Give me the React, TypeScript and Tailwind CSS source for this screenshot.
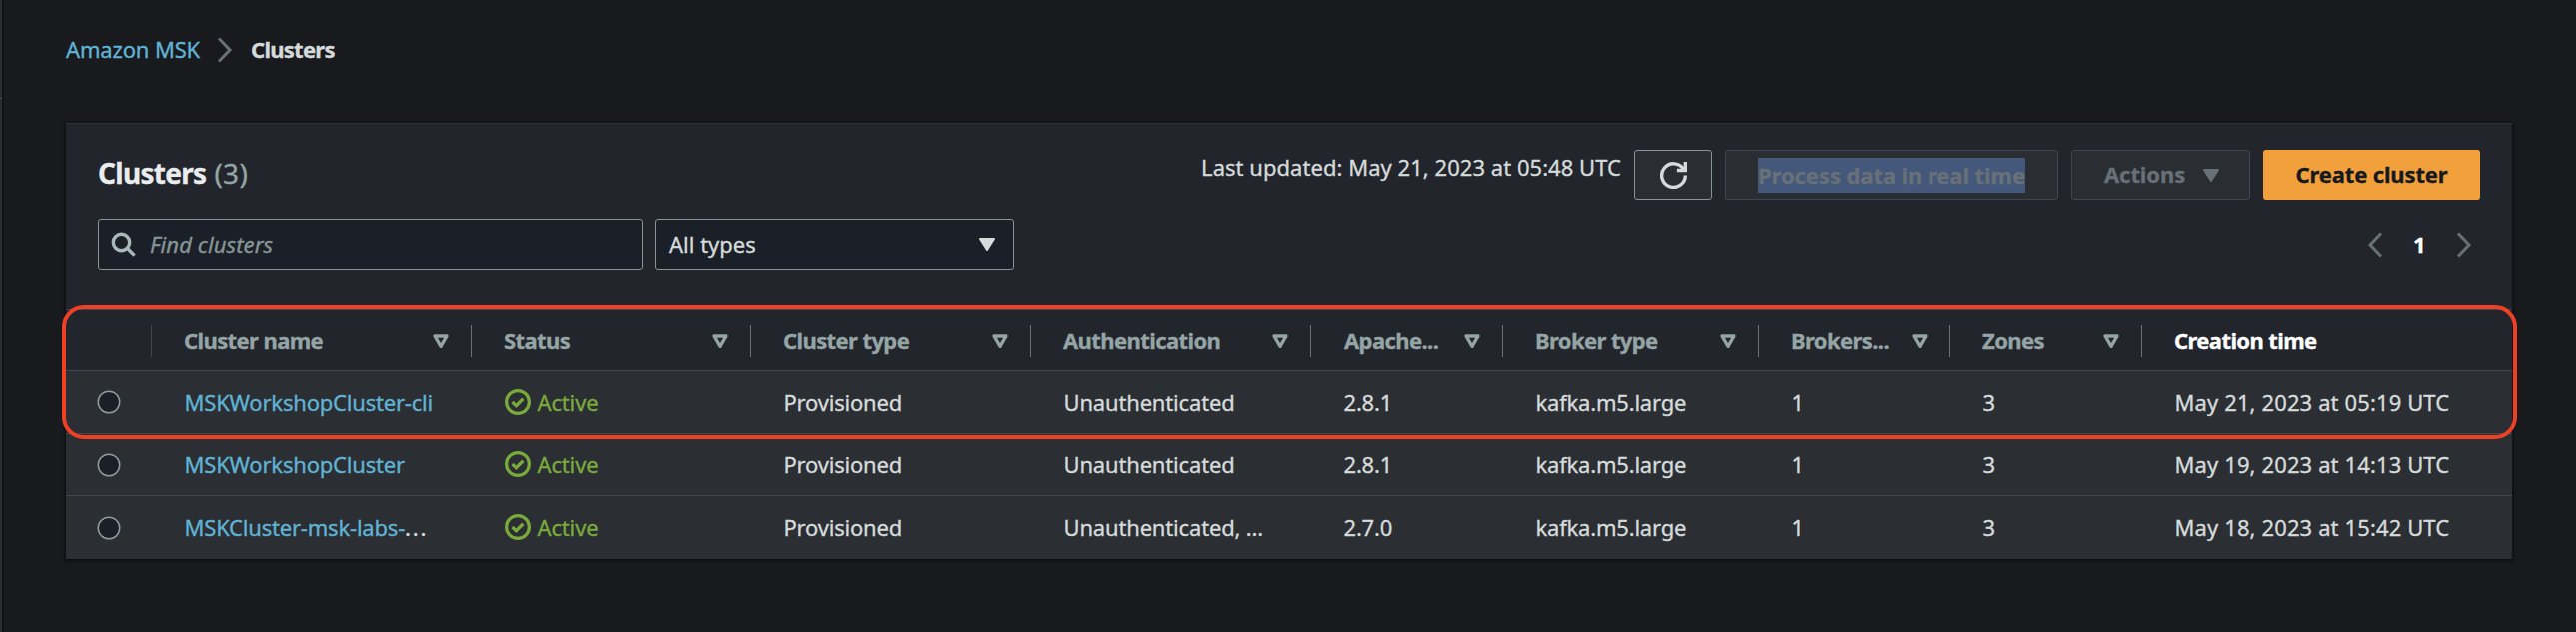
import type { ReactNode } from "react";

type Cluster = {
  name: string;
  truncated?: boolean;
  auth: string;
  version: string;
  created: string;
  height: string;
};

const GRID =
  "grid grid-cols-[86px_320px_280px_280px_280px_192px_256px_192px_192px_370px]";

const columns = [
  { label: "Cluster name", pad: "pl-[32px]" },
  { label: "Status", pad: "pl-[32px]" },
  { label: "Cluster type", pad: "pl-[32px]" },
  { label: "Authentication", pad: "pl-[32px]" },
  { label: "Apache...", pad: "pl-[33px]" },
  { label: "Broker type", pad: "pl-[32px]" },
  { label: "Brokers...", pad: "pl-[32px]" },
  { label: "Zones", pad: "pl-[32px]" },
];

const clusters: Cluster[] = [
  {
    name: "MSKWorkshopCluster-cli",
    auth: "Unauthenticated",
    version: "2.8.1",
    created: "May 21, 2023 at 05:19 UTC",
    height: "h-[63px] border-b",
  },
  {
    name: "MSKWorkshopCluster",
    auth: "Unauthenticated",
    version: "2.8.1",
    created: "May 19, 2023 at 14:13 UTC",
    height: "h-[62px] border-b",
  },
  {
    name: "MSKCluster-msk-labs-",
    truncated: true,
    auth: "Unauthenticated, ...",
    version: "2.7.0",
    created: "May 18, 2023 at 15:42 UTC",
    height: "h-[63px]",
  },
];

function Chevron({ left = false }: { left?: boolean }) {
  return (
    <svg
      width="16"
      height="26"
      viewBox="0 0 16 26"
      fill="none"
      stroke="#687078"
      strokeWidth="3"
      className={left ? "rotate-180" : ""}
    >
      <path d="M2 1.5 L13 13 L2 24.5" />
    </svg>
  );
}

function SolidCaret({ className }: { className: string }) {
  return (
    <svg width="18" height="15" viewBox="0 0 18 15" className={className}>
      <path
        d="M2 2 H16 L9 13 Z"
        fill="currentColor"
        stroke="currentColor"
        strokeWidth="2"
        strokeLinejoin="round"
      />
    </svg>
  );
}

function SortIcon() {
  return (
    <svg
      width="16"
      height="15"
      viewBox="0 0 16 15"
      fill="none"
      stroke="#95a5a6"
      strokeWidth="3.3"
      strokeLinejoin="round"
      className="relative left-px"
    >
      <path d="M2 2 H14 L8 12.3 Z" />
    </svg>
  );
}

function SearchIcon() {
  return (
    <svg
      width="26"
      height="26"
      viewBox="0 0 26 26"
      fill="none"
      stroke="#aab7b8"
      strokeWidth="3.4"
    >
      <circle cx="10.5" cy="10.5" r="8.2" />
      <path d="M16.3 16.3 L23.6 23.6" />
    </svg>
  );
}

function RefreshIcon() {
  return (
    <svg
      width="27"
      height="27"
      viewBox="0 0 16 16"
      fill="none"
      stroke="#d5dbdb"
      strokeWidth="2"
    >
      <path d="M15 8 A7 7 0 1 1 13.9 4.3" />
      <path d="M10 5 H15 V0" />
    </svg>
  );
}

function ActiveStatus() {
  return (
    <span className="flex items-center gap-[7px] tracking-[-0.15px] text-[#7aaa3c]">
      <svg
        width="26"
        height="26"
        viewBox="0 0 16 16"
        fill="none"
        stroke="currentColor"
        strokeWidth="2"
      >
        <circle cx="8" cy="8" r="7" />
        <path d="M4.6 8 L7 10.3 L11.3 6" />
      </svg>
      Active
    </span>
  );
}

function Cell({ children }: { children: ReactNode }) {
  return (
    <div className="flex items-center pb-px pl-[32.5px] whitespace-nowrap">{children}</div>
  );
}

export default function App() {
  return (
    <div className="relative flex h-[632px] w-[2578px] overflow-hidden bg-[#191a1e] font-['Noto_Sans',sans-serif] text-[22px] leading-[30px] text-[#d5dbdb] [-webkit-text-stroke:0.35px]">
      <aside className="w-[2px] shrink-0 bg-[#2a2e33] pt-[98px] shadow-[1px_0_2px_rgba(0,0,0,0.6)]">
        <div className="h-px bg-[#50555c]" />
      </aside>

      <main className="w-[2512px] pl-[64px]">
        <nav className="flex h-[99px] items-center">
          <span className="pb-px tracking-[-0.15px] text-[#60b3d4]">Amazon MSK</span>
          <span className="mr-[18px] ml-[17px]">
            <Chevron />
          </span>
          <span className="pb-px font-bold tracking-[-0.75px]">Clusters</span>
        </nav>

        <section className="mt-[24px] h-[436px] border-t border-[#303338] bg-[#22252c] shadow-[0_1px_3px_1px_rgba(0,0,0,0.55)]">
          <header className="flex h-[76px] pt-[26px] pr-[32px] pl-[32px]">
            <h1 className="mt-[4px] flex h-[38px] items-center gap-[8px] text-[28px] font-bold tracking-[-0.7px] text-[#eaeded]">
              Clusters
              <span className="font-normal tracking-[0.3px] text-[#95a5a6]">(3)</span>
            </h1>
            <div className="ml-auto flex whitespace-nowrap">
              <span className="mt-[2px] mr-[13px] tracking-[0.04px]">
                Last updated: May 21, 2023 at 05:48 UTC
              </span>
              <button className="mr-[13px] flex h-[50px] w-[78px] items-center justify-center rounded-[3px] border border-[#879596] bg-[#2a2e33]">
                <RefreshIcon />
              </button>
              <button className="mr-[13px] flex h-[50px] w-[334px] items-center justify-center rounded-[3px] border border-[#414750] bg-[#2a2e33] font-bold tracking-[-0.08px] text-[#687078]">
                <span className="h-[35px] bg-[#43587a] leading-[34px]">
                  Process data in real time
                </span>
              </button>
              <button className="mr-[13px] flex h-[50px] w-[179px] items-center rounded-[3px] border border-[#414750] bg-[#2a2e33] pl-[32px] font-bold text-[#687078]">
                <span className="w-[98px] pb-[2px] text-left tracking-[-0.1px]">Actions</span>
                <SolidCaret className="text-[#687078]" />
              </button>
              <button className="h-[50px] w-[217px] rounded-[3px] bg-[#f2a03b] pb-[2px] font-bold tracking-[-0.15px] text-[#16191f]">
                Create cluster
              </button>
            </div>
          </header>

          <div className="mt-[19px] flex h-[51px] items-stretch pr-[40px] pl-[32px]">
            <div className="flex w-[545px] items-center rounded-[3px] border border-[#879596] bg-[#1b2028] pl-[12px]">
              <SearchIcon />
              <span className="ml-[13px] pb-px tracking-[0.1px] text-[#879596] italic">
                Find clusters
              </span>
            </div>
            <div className="ml-[13px] flex w-[359px] items-center justify-between rounded-[3px] border border-[#879596] bg-[#1b2028] pr-[17px] pl-[13px]">
              <span className="pb-px tracking-normal">All types</span>
              <SolidCaret className="text-[#d5dbdb]" />
            </div>
            <div className="ml-auto flex items-center">
              <Chevron left />
              <span className="mr-[31px] ml-[30px] w-[12px] pb-[2px] font-bold text-white">
                1
              </span>
              <Chevron />
            </div>
          </div>

          <div className="mt-[39px] border-t border-[#414750]">
            <div
              className={`${GRID} h-[61px] border-b border-[#414750] font-bold tracking-[-0.6px] text-[#95a5a6]`}
            >
              <div className="my-[15px] border-r border-[#414750]" />
              {columns.map((c) => (
                <div
                  key={c.label}
                  className={`my-[15px] flex items-center justify-between border-r border-[#687078] pr-[23px] whitespace-nowrap ${c.pad}`}
                >
                  <span className="pb-[2px]">{c.label}</span>
                  <SortIcon />
                </div>
              ))}
              <div className="flex items-center pb-[2px] pl-[32px] text-white">
                Creation time
              </div>
            </div>

            {clusters.map((c) => (
              <div
                key={c.name}
                className={`${GRID} border-[#414750] bg-[#2b2e33] tracking-[-0.2px] ${c.height}`}
              >
                <div className="flex items-center pl-[32px]">
                  <span className="h-[22px] w-[22px] rounded-full border-[1.5px] border-[#98a5a6] bg-[#1b2028] ring-[0.5px] ring-[#879596]" />
                </div>
                <Cell>
                  <span className="tracking-[-0.2px] text-[#60b3d4]">{c.name}</span>
                  {c.truncated && <span className="tracking-[1.8px]">...</span>}
                </Cell>
                <Cell>
                  <ActiveStatus />
                </Cell>
                <Cell>Provisioned</Cell>
                <Cell>
                  <span className="tracking-[-0.17px]">{c.auth}</span>
                </Cell>
                <Cell>{c.version}</Cell>
                <Cell>kafka.m5.large</Cell>
                <Cell>1</Cell>
                <Cell>3</Cell>
                <Cell>
                  <span className="tracking-[0.12px]">{c.created}</span>
                </Cell>
              </div>
            ))}
          </div>
        </section>
      </main>

      <div className="pointer-events-none absolute top-[305px] left-[62px] h-[134px] w-[2457px] rounded-[22px] border-4 border-[#ed4024]" />
    </div>
  );
}
